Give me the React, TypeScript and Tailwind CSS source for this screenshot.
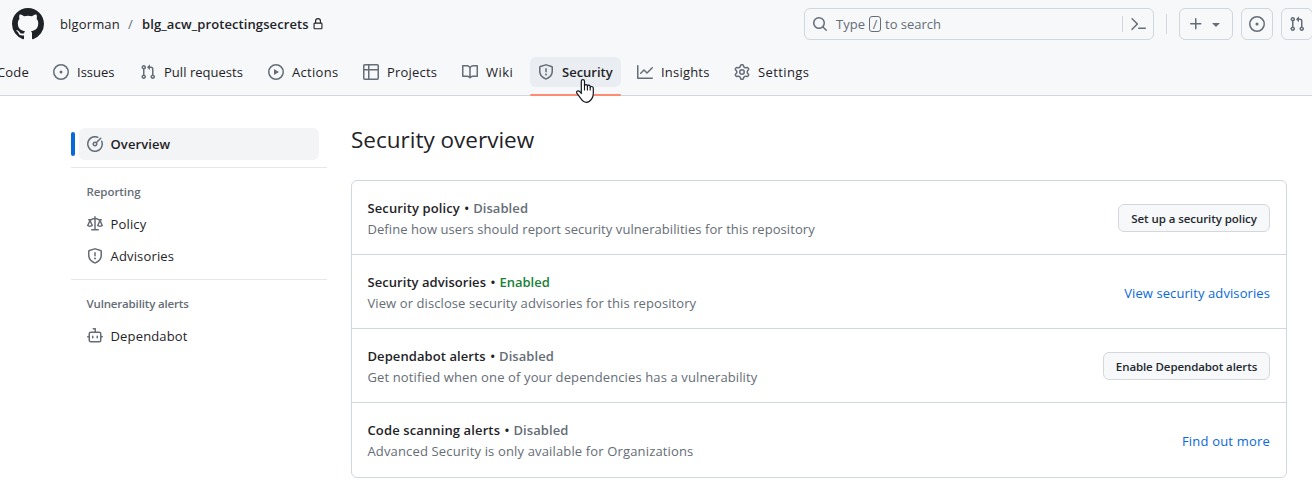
import React from "react";

const paths = {
  mark: "M8 0c4.42 0 8 3.58 8 8a8.013 8.013 0 0 1-5.45 7.59c-.4.08-.55-.17-.55-.38 0-.27.01-1.13.01-2.2 0-.75-.25-1.23-.54-1.48 1.78-.2 3.65-.88 3.65-3.95 0-.88-.31-1.59-.82-2.15.08-.2.36-1.02-.08-2.12 0 0-.67-.22-2.2.82-.64-.18-1.32-.27-2-.27-.68 0-1.36.09-2 .27-1.53-1.03-2.2-.82-2.2-.82-.44 1.1-.16 1.92-.08 2.12-.51.56-.82 1.28-.82 2.15 0 3.06 1.86 3.75 3.64 3.95-.23.2-.44.55-.51 1.07-.46.21-1.61.55-2.33-.66-.15-.24-.6-.83-1.23-.82-.67.01-.27.38.01.53.34.19.73.9.82 1.13.16.45.68 1.31 2.69.94 0 .67.01 1.3.01 1.49 0 .21-.15.45-.55.38A7.995 7.995 0 0 1 0 8c0-4.42 3.58-8 8-8Z",
  issue: "M8 9.5a1.5 1.5 0 1 0 0-3 1.5 1.5 0 0 0 0 3ZM8 0a8 8 0 1 1 0 16A8 8 0 0 1 8 0ZM1.5 8a6.5 6.5 0 1 0 13 0 6.5 6.5 0 0 0-13 0Z",
  pull: "M1.5 3.25a2.25 2.25 0 1 1 3 2.122v5.256a2.251 2.251 0 1 1-1.5 0V5.372A2.25 2.25 0 0 1 1.5 3.25Zm5.677-.177L9.573.677A.25.25 0 0 1 10 .854V2.5h1A2.5 2.5 0 0 1 13.5 5v5.628a2.251 2.251 0 1 1-1.5 0V5a1 1 0 0 0-1-1h-1v1.646a.25.25 0 0 1-.427.177L7.177 3.427a.25.25 0 0 1 0-.354ZM3.75 2.5a.75.75 0 1 0 0 1.5.75.75 0 0 0 0-1.5Zm0 9.5a.75.75 0 1 0 0 1.5.75.75 0 0 0 0-1.5Zm8.25.75a.75.75 0 1 0 1.5 0 .75.75 0 0 0-1.5 0Z",
  play: "M8 0a8 8 0 1 1 0 16A8 8 0 0 1 8 0ZM1.5 8a6.5 6.5 0 1 0 13 0 6.5 6.5 0 0 0-13 0Zm4.879-2.773 4.264 2.559a.25.25 0 0 1 0 .428l-4.264 2.559A.25.25 0 0 1 6 10.559V5.442a.25.25 0 0 1 .379-.215Z",
  table: "M0 1.75C0 .784.784 0 1.75 0h12.5C15.216 0 16 .784 16 1.75v12.5A1.75 1.75 0 0 1 14.25 16H1.75A1.75 1.75 0 0 1 0 14.25ZM6.5 6.5v8h7.75a.25.25 0 0 0 .25-.25V6.5Zm8-1.5V1.75a.25.25 0 0 0-.25-.25H6.5V5Zm-13 1.5v7.75c0 .138.112.25.25.25H5v-8ZM5 5V1.5H1.75a.25.25 0 0 0-.25.25V5Z",
  book: "M0 1.75A.75.75 0 0 1 .75 1h4.253c1.227 0 2.317.59 3 1.501A3.743 3.743 0 0 1 11.006 1h4.245a.75.75 0 0 1 .75.75v10.5a.75.75 0 0 1-.75.75h-4.507a2.25 2.25 0 0 0-1.591.659l-.622.621a.75.75 0 0 1-1.06 0l-.622-.621A2.25 2.25 0 0 0 5.258 13H.75a.75.75 0 0 1-.75-.75Zm7.251 10.324.004-5.073-.002-2.253A2.25 2.25 0 0 0 5.003 2.5H1.5v9h3.757a3.75 3.75 0 0 1 1.994.574ZM8.755 4.75l-.004 7.322a3.752 3.752 0 0 1 1.992-.572H14.5v-9h-3.495a2.25 2.25 0 0 0-2.25 2.25Z",
  shield: "M7.467.133a1.748 1.748 0 0 1 1.066 0l5.25 1.68A1.75 1.75 0 0 1 15 3.48V7c0 1.566-.32 3.182-1.303 4.682-.983 1.498-2.585 2.813-5.032 3.855a1.697 1.697 0 0 1-1.33 0c-2.447-1.042-4.049-2.357-5.032-3.855C1.32 10.182 1 8.566 1 7V3.48a1.75 1.75 0 0 1 1.217-1.667Zm.61 1.429a.25.25 0 0 0-.153 0l-5.25 1.68a.25.25 0 0 0-.174.238V7c0 1.358.275 2.666 1.057 3.86.784 1.194 2.121 2.34 4.366 3.297a.196.196 0 0 0 .154 0c2.245-.956 3.582-2.104 4.366-3.298C13.225 9.666 13.5 8.36 13.5 7V3.48a.251.251 0 0 0-.174-.237l-5.25-1.68ZM8.75 4.75v3a.75.75 0 0 1-1.5 0v-3a.75.75 0 0 1 1.5 0ZM9 10.5a1 1 0 1 1-2 0 1 1 0 0 1 2 0Z",
  graph: "M1.5 1.75V13.5h13.75a.75.75 0 0 1 0 1.5H.75a.75.75 0 0 1-.75-.75V1.75a.75.75 0 0 1 1.5 0Zm14.28 2.53-5.25 5.25a.75.75 0 0 1-1.06 0L7 7.06 4.28 9.78a.751.751 0 0 1-1.042-.018.751.751 0 0 1-.018-1.042l3.25-3.25a.75.75 0 0 1 1.06 0L10 7.94l4.72-4.72a.751.751 0 0 1 1.042.018.751.751 0 0 1 .018 1.042Z",
  gear: "M8 0a8.2 8.2 0 0 1 .701.031C9.444.095 9.99.645 10.16 1.29l.288 1.107c.018.066.079.158.212.224.231.114.454.243.668.386.123.082.233.09.299.071l1.103-.303c.644-.176 1.392.021 1.82.63.27.385.506.792.704 1.218.315.675.111 1.422-.364 1.891l-.814.806c-.049.048-.098.147-.088.294.016.257.016.515 0 .772-.01.147.038.246.088.294l.814.806c.475.469.679 1.216.364 1.891a7.977 7.977 0 0 1-.704 1.217c-.428.61-1.176.807-1.82.63l-1.102-.302c-.067-.019-.177-.011-.3.071a5.909 5.909 0 0 1-.668.386c-.133.066-.194.158-.211.224l-.29 1.106c-.168.646-.715 1.196-1.458 1.26a8.006 8.006 0 0 1-1.402 0c-.743-.064-1.289-.614-1.458-1.26l-.289-1.106c-.018-.066-.079-.158-.212-.224a5.738 5.738 0 0 1-.668-.386c-.123-.082-.233-.09-.299-.071l-1.103.303c-.644.176-1.392-.021-1.82-.63a8.12 8.12 0 0 1-.704-1.218c-.315-.675-.111-1.422.363-1.891l.815-.806c.05-.048.098-.147.088-.294a6.214 6.214 0 0 1 0-.772c.01-.147-.038-.246-.088-.294l-.815-.806C.635 6.045.431 5.298.746 4.623a7.92 7.92 0 0 1 .704-1.217c.428-.61 1.176-.807 1.82-.63l1.102.302c.067.019.177.011.3-.071.214-.143.437-.272.668-.386.133-.066.194-.158.211-.224l.29-1.106C6.009.645 6.556.095 7.299.03 7.53.01 7.764 0 8 0Zm-.571 1.525c-.036.003-.108.036-.137.146l-.289 1.105c-.147.561-.549.967-.998 1.189-.173.086-.34.183-.5.29-.417.278-.97.423-1.529.27l-1.103-.303c-.109-.03-.175.016-.195.045-.22.312-.412.644-.573.99-.014.031-.021.11.059.19l.815.806c.411.406.562.957.53 1.456a4.709 4.709 0 0 0 0 .582c.032.499-.119 1.05-.53 1.456l-.815.806c-.081.08-.073.159-.059.19.162.346.353.677.573.989.02.03.085.076.195.046l1.102-.303c.56-.153 1.113-.008 1.53.27.161.107.328.204.501.29.447.222.85.629.997 1.189l.289 1.105c.029.109.101.143.137.146a6.6 6.6 0 0 0 1.142 0c.036-.003.108-.036.137-.146l.289-1.105c.147-.561.549-.967.998-1.189.173-.086.34-.183.5-.29.417-.278.97-.423 1.529-.27l1.103.303c.109.029.175-.016.195-.045.22-.313.411-.644.573-.99.014-.031.021-.11-.059-.19l-.815-.806c-.411-.406-.562-.957-.53-1.456a4.709 4.709 0 0 0 0-.582c-.032-.499.119-1.05.53-1.456l.815-.806c.081-.08.073-.159.059-.19a6.464 6.464 0 0 0-.573-.989c-.02-.03-.085-.076-.195-.046l-1.102.303c-.56.153-1.113.008-1.53-.27a4.44 4.44 0 0 0-.501-.29c-.447-.222-.85-.629-.997-1.189l-.289-1.105c-.029-.11-.101-.143-.137-.146a6.6 6.6 0 0 0-1.142 0ZM11 8a3 3 0 1 1-6 0 3 3 0 0 1 6 0ZM9.5 8a1.5 1.5 0 1 0-3.001.001A1.5 1.5 0 0 0 9.5 8Z",
  search: "M10.68 11.74a6 6 0 0 1-7.922-8.982 6 6 0 0 1 8.982 7.922l3.04 3.04a.749.749 0 0 1-.326 1.275.749.749 0 0 1-.734-.215ZM11.5 7a4.499 4.499 0 1 0-8.997 0A4.499 4.499 0 0 0 11.5 7Z",
  lock: "M4 4a4 4 0 0 1 8 0v2h.25c.966 0 1.75.784 1.75 1.75v5.5A1.75 1.75 0 0 1 12.25 15h-8.5A1.75 1.75 0 0 1 2 13.25v-5.5C2 6.784 2.784 6 3.75 6H4Zm8.25 3.5h-8.5a.25.25 0 0 0-.25.25v5.5c0 .138.112.25.25.25h8.5a.25.25 0 0 0 .25-.25v-5.5a.25.25 0 0 0-.25-.25ZM10.5 6V4a2.5 2.5 0 1 0-5 0v2Z",
  plus: "M7.75 2a.75.75 0 0 1 .75.75V7h4.25a.75.75 0 0 1 0 1.5H8.5v4.25a.75.75 0 0 1-1.5 0V8.5H2.75a.75.75 0 0 1 0-1.5H7V2.75A.75.75 0 0 1 7.75 2Z",
  down: "m4.427 7.427 3.396 3.396a.25.25 0 0 0 .354 0l3.396-3.396A.25.25 0 0 0 11.396 7H4.604a.25.25 0 0 0-.177.427Z",
  meter: "M8 1.5a6.5 6.5 0 1 0 6.016 4.035.75.75 0 0 1 1.388-.57 8 8 0 1 1-4.37-4.37.75.75 0 0 1-.569 1.389A6.473 6.473 0 0 0 8 1.5Zm6.28.22a.75.75 0 0 1 0 1.06l-4.063 4.064a2.5 2.5 0 1 1-1.06-1.06L13.22 1.72a.75.75 0 0 1 1.06 0ZM7 8a1 1 0 1 0 2 0 1 1 0 0 0-2 0Z",
  law: "M8.75.75V2h.985c.304 0 .603.08.867.231l1.29.736c.038.022.08.033.124.033h2.234a.75.75 0 0 1 0 1.5h-.427l2.111 4.692a.75.75 0 0 1-.154.838l-.53-.53.529.531-.001.002-.002.002-.006.006-.006.005-.01.01-.045.04c-.21.176-.441.327-.686.45C14.556 10.78 13.88 11 13 11a4.498 4.498 0 0 1-2.023-.454 3.544 3.544 0 0 1-.686-.45l-.045-.04-.016-.015-.006-.006-.004-.004v-.001a.75.75 0 0 1-.154-.838L12.178 4.5h-.162c-.305 0-.604-.079-.868-.231l-1.29-.736a.245.245 0 0 0-.124-.033H8.75V13h2.5a.75.75 0 0 1 0 1.5h-6.5a.75.75 0 0 1 0-1.5h2.5V3.5h-.984a.245.245 0 0 0-.124.033l-1.289.737c-.265.15-.564.23-.869.23h-.162l2.112 4.692a.75.75 0 0 1-.154.838l-.53-.53.529.531-.001.002-.002.002-.006.006-.016.015-.045.04c-.21.176-.441.327-.686.45C4.556 10.78 3.88 11 3 11a4.498 4.498 0 0 1-2.023-.454 3.544 3.544 0 0 1-.686-.45l-.045-.04-.016-.015-.006-.006-.004-.004v-.001a.75.75 0 0 1-.154-.838L2.178 4.5H1.75a.75.75 0 0 1 0-1.5h2.234a.249.249 0 0 0 .125-.033l1.288-.737c.265-.15.564-.23.869-.23h.984V.75a.75.75 0 0 1 1.5 0Zm2.945 8.477c.285.135.718.273 1.305.273s1.02-.138 1.305-.273L13 6.327Zm-10 0c.285.135.718.273 1.305.273s1.02-.138 1.305-.273L3 6.327Z",
  bot: "M5.75 7.5a.75.75 0 0 1 .75.75v1.5a.75.75 0 0 1-1.5 0v-1.5a.75.75 0 0 1 .75-.75Zm5.25.75a.75.75 0 0 0-1.5 0v1.5a.75.75 0 0 0 1.5 0v-1.5ZM6.25 0h2A.75.75 0 0 1 9 .75V3.5h3.25a2.25 2.25 0 0 1 2.25 2.25V8h.75a.75.75 0 0 1 0 1.5h-.75v2.75a2.25 2.25 0 0 1-2.25 2.25h-8.5a2.25 2.25 0 0 1-2.25-2.25V9.5H.75a.75.75 0 0 1 0-1.5h.75V5.75A2.25 2.25 0 0 1 3.75 3.5H7.5v-2H6.25a.75.75 0 0 1 0-1.5ZM3 5.75v6.5c0 .414.336.75.75.75h8.5a.75.75 0 0 0 .75-.75v-6.5a.75.75 0 0 0-.75-.75h-8.5a.75.75 0 0 0-.75.75Z",
  command: "m6.354 8.04-4.773 4.773a.75.75 0 1 0 1.061 1.06L7.945 8.57a.75.75 0 0 0 0-1.06L2.642 2.206a.75.75 0 0 0-1.06 1.061L6.353 8.04ZM8.75 11.5a.75.75 0 0 0 0 1.5h6.5a.75.75 0 0 0 0-1.5h-6.5Z",
};

type IconName = keyof typeof paths;

function Icon({ name, className = "size-4" }: { name: IconName; className?: string }) {
  return (
    <svg viewBox="0 0 16 16" fill="currentColor" fillRule="evenodd" className={`shrink-0 ${className}`} aria-hidden="true">
      <path d={paths[name]} />
    </svg>
  );
}

const tabs: { icon: IconName; label: string; width: string; tracking: string; active?: boolean }[] = [
  { icon: "issue", label: "Issues", width: "w-[39px]", tracking: "" },
  { icon: "pull", label: "Pull requests", width: "w-20", tracking: "tracking-[0.03px]" },
  { icon: "play", label: "Actions", width: "w-[47px]", tracking: "tracking-[0.3px]" },
  { icon: "table", label: "Projects", width: "w-[51px]", tracking: "tracking-[0.2px]" },
  { icon: "book", label: "Wiki", width: "w-7", tracking: "tracking-[0.5px]" },
  { icon: "shield", label: "Security", width: "w-[51px]", tracking: "", active: true },
  { icon: "graph", label: "Insights", width: "w-[49px]", tracking: "tracking-[0.2px]" },
  { icon: "gear", label: "Settings", width: "w-[51px]", tracking: "tracking-[0.38px]" },
];

function Cursor() {
  return (
    <svg viewBox="0 0 18 24" className="absolute left-[46px] top-[31px] h-6 w-[18px]" aria-hidden="true">
      <path
        d="M5.3 14.5V2.3C5.3 1.2 6 .6 6.9 .6S8.5 1.2 8.5 2.3V7C8.6 6.1 9.1 5.7 9.9 5.7S11.4 6.2 11.4 7.1C11.5 6.5 12 6.2 12.7 6.2C13.6 6.2 14.2 6.8 14.2 7.7V8.2C14.4 7.8 14.8 7.5 15.4 7.5C16.5 7.5 17.3 8.2 17.3 9.4V14.5C17.3 17.2 16.7 18.4 15.7 19.9C14.5 21.8 13.3 23.3 10.3 23.3C7.3 23.3 6 21.5 4.7 19.3L1 14.3C.4 13.4 .6 12.5 1.3 12.1C2.2 11.5 3.1 11.8 3.8 12.6Z"
        fill="white"
        stroke="#14161f"
        strokeWidth="1.2"
        strokeLinejoin="round"
      />
      <path d="M8.5 6.5v5M11.4 7v4.5M14.2 8v3.5" stroke="#14161f" strokeWidth="1.1" fill="none" />
    </svg>
  );
}

function Header() {
  return (
    <header className="h-24 border-b border-[#d0d7de] bg-[#f6f8fa]">
      <div className="flex h-12 items-center overflow-hidden pl-3">
        <Icon name="mark" className="size-8 text-[#1f2328]" />
        <span className="ml-4 w-[61px] shrink-0 tracking-[0.15px]">blgorman</span>
        <span className="ml-[7px] w-[13px] shrink-0 text-[#656d76]">/</span>
        <span className="ml-px w-[167px] shrink-0 font-semibold tracking-[0.09px]">blg_acw_protectingsecrets</span>
        <Icon name="lock" className="ml-[3px] size-3 text-[#1f2328]" />
        <div className="ml-[480px] flex h-8 w-[350px] shrink-0 items-center rounded-md border border-[#d0d7de] pl-[7px] text-[#656d76]">
          <Icon name="search" />
          <span className="ml-2 w-[30px]">Type</span>
          <kbd className="ml-[3px] flex h-4 w-3 items-center justify-center rounded-[3px] border border-[#656d76] font-['Open_Sans',sans-serif] text-[12.5px]">/</kbd>
          <span className="ml-1">to search</span>
          <div className="ml-auto h-4 w-px bg-[#d0d7de]" />
          <Icon name="command" className="ml-[7px] mr-[7px] size-4" />
        </div>
        <div className="ml-3 h-5 w-px shrink-0 bg-[#d0d7de]" />
        <div className="ml-3 flex h-8 w-[54px] shrink-0 items-center rounded-md border border-[#d0d7de] pl-2 text-[#656d76]">
          <Icon name="plus" />
          <Icon name="down" className="ml-1 size-4" />
        </div>
        <div className="ml-2 flex size-8 shrink-0 items-center justify-center rounded-md border border-[#d0d7de] text-[#656d76]">
          <Icon name="issue" />
        </div>
        <div className="ml-2 flex size-8 shrink-0 items-center justify-center rounded-md border border-[#d0d7de] text-[#656d76]">
          <Icon name="pull" />
        </div>
      </div>
      <nav className="flex h-12">
        <div className="flex h-12 w-[37px] shrink-0 items-center justify-end pr-2 tracking-[0.2px]">Code</div>
        <div className="flex gap-2 pl-2">
          {tabs.map((t) => (
            <div key={t.label} className="relative flex h-12 items-center">
              <div className={`flex h-[30px] items-center gap-2 rounded-md px-2 ${t.active ? "bg-[#eaedf1] font-semibold" : ""}`}>
                <Icon name={t.icon} className="size-4 text-[#656d76]" />
                <span className={`${t.width} ${t.tracking}`}>{t.label}</span>
              </div>
              {t.active && <div className="absolute inset-x-0 bottom-0 h-0.5 rounded-md bg-[#fd8c73]" />}
              {t.active && <Cursor />}
            </div>
          ))}
        </div>
      </nav>
    </header>
  );
}

function SideItem({ icon, label, active }: { icon: IconName; label: string; active?: boolean }) {
  return (
    <div className="flex h-8 items-center">
      <div className={`h-6 w-1 rounded-md ${active ? "bg-[#0969da]" : ""}`} />
      <div className={`ml-1 flex h-8 w-60 items-center gap-[7.5px] rounded-md px-2 ${active ? "bg-[#f3f4f6] font-semibold tracking-[0.1px]" : "tracking-[0.16px]"}`}>
        <Icon name={icon} className="size-4 text-[#656d76]" />
        <span>{label}</span>
      </div>
    </div>
  );
}

const rows = [
  {
    title: "Security policy",
    titleTracking: "tracking-[0.1px]",
    enabled: false,
    text: "Define how users should report security vulnerabilities for this repository",
    textTracking: "tracking-[0.065px]",
    action: "Set up a security policy",
    actionStyle: "w-[152px] tracking-[-0.06px]",
    button: true,
  },
  {
    title: "Security advisories",
    titleTracking: "tracking-[0.05px]",
    enabled: true,
    text: "View or disclose security advisories for this repository",
    textTracking: "tracking-[0.09px]",
    action: "View security advisories",
    actionStyle: "pt-[3px] tracking-[0.09px]",
    button: false,
  },
  {
    title: "Dependabot alerts",
    titleTracking: "tracking-[0.08px]",
    enabled: false,
    text: "Get notified when one of your dependencies has a vulnerability",
    textTracking: "tracking-[0.12px]",
    action: "Enable Dependabot alerts",
    actionStyle: "w-[167px] tracking-[-0.1px]",
    button: true,
  },
  {
    title: "Code scanning alerts",
    titleTracking: "tracking-[0.12px]",
    enabled: false,
    text: "Advanced Security is only available for Organizations",
    textTracking: "tracking-[0.15px]",
    action: "Find out more",
    actionStyle: "pt-[3px] tracking-[0.19px]",
    button: false,
  },
];

export default function App() {
  return (
    <div className="h-[496px] w-[1312px] overflow-hidden whitespace-nowrap bg-white font-['Open_Sans','Noto_Sans',sans-serif] text-[13px] leading-[21px] text-[#1f2328]">
      <Header />
      <div className="flex">
        <aside className="ml-[71px] mt-8 w-64">
          <SideItem icon="meter" label="Overview" active />
          <div className="mt-[7px] h-px bg-[#e4e8ec]" />
          <h3 className="mt-[14px] pl-[15.5px] text-[11.5px] font-semibold leading-5 tracking-[-0.05px] text-[#656d76]">Reporting</h3>
          <div className="mt-[6px]">
            <SideItem icon="law" label="Policy" />
            <SideItem icon="shield" label="Advisories" />
          </div>
          <div className="mt-[7px] h-px bg-[#e4e8ec]" />
          <h3 className="mt-[14px] pl-[15.5px] text-[11.5px] font-semibold leading-5 tracking-[-0.16px] text-[#656d76]">Vulnerability alerts</h3>
          <div className="mt-[6px]">
            <SideItem icon="bot" label="Dependabot" />
          </div>
        </aside>
        <main className="ml-6 mt-[26px] w-[936px]">
          <h2 className="text-[22.5px] leading-9">Security overview</h2>
          <div className="mt-[22px] rounded-md border border-[#d0d7de]">
            {rows.map((r) => (
              <div key={r.title} className="flex h-[74px] items-center justify-between border-b border-[#d0d7de] pl-[15.5px] pr-4 last:border-b-0">
                <div className="pt-0.5">
                  <div className="font-semibold">
                    <span className={r.titleTracking}>{r.title}</span>
                    <span className="ml-[4.5px] mr-[4px]">•</span>
                    <span className={r.enabled ? "text-[#1a7f37]" : "tracking-[0.07px] text-[#656d76]"}>{r.enabled ? "Enabled" : "Disabled"}</span>
                  </div>
                  <div className={`text-[#656d76] ${r.textTracking}`}>{r.text}</div>
                </div>
                {r.button ? (
                  <button className={`h-7 rounded-md border border-[#d5d8da] bg-[#f6f8fa] pt-px text-[11.5px] font-semibold text-[#24292f] ${r.actionStyle}`}>{r.action}</button>
                ) : (
                  <a className={`text-[#0969da] ${r.actionStyle}`}>{r.action}</a>
                )}
              </div>
            ))}
          </div>
        </main>
      </div>
    </div>
  );
}
